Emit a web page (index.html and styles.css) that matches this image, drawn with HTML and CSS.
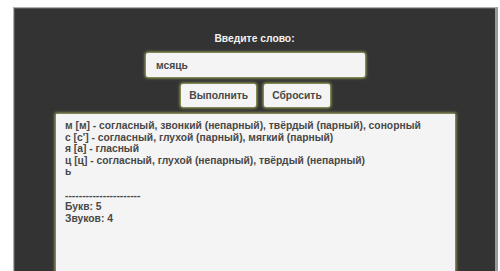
FILE: index.html
```html
<!DOCTYPE html>
<html lang="ru">
<head>
    <meta charset="UTF-8">
    <title>Фонетический разбор</title>
    <link rel="stylesheet" href="styles.css">
</head>
<body>
    <div class="panel">
        <label class="title" for="word">Введите слово:</label>
        <input type="text" id="word" class="word-input" value="мсяць">
        <div class="buttons">
            <button class="btn">Выполнить</button>
            <button class="btn">Сбросить</button>
        </div>
        <div class="result">м [м] - согласный, звонкий (непарный), твёрдый (парный), сонорный
с [с'] - согласный, глухой (парный), мягкий (парный)
я [а] - гласный
ц [ц] - согласный, глухой (непарный), твёрдый (непарный)
ь

----------------------
Букв: 5
Звуков: 4</div>
    </div>
</body>
</html>
```

FILE: styles.css
```css
:root {
    --panel-bg: #333333; --box-bg: #f4f4f4; --text-color: #484848;
    --glow: rgba(220, 230, 120, 0.75);
}
html, body { height: 100%; }
body { margin: 0; background-color: #ffffff; font-family: 'Liberation Sans', Arial, sans-serif; overflow: hidden; }
.panel { margin: 7px 2px 0 13px; height: calc(100% - 7px); overflow: hidden; background-color: var(--panel-bg); border: 1px solid #b0b0b0; border-bottom: none; border-right: 3px solid #9a9a9a; box-shadow: inset 1px 1px 0 #555; display: flex; flex-direction: column; align-items: center; padding-top: 25px; box-sizing: border-box; }
.title { color: #f2f2f2; font-weight: bold; font-size: 10.3px; margin-bottom: 9px; }
.word-input { width: 219px; height: 24px; flex-shrink: 0; box-sizing: border-box; border: none; border-radius: 2px; background-color: var(--box-bg); box-shadow: 0 0 3px 1px var(--glow); padding: 0 10px; margin-left: 2px; font-family: inherit; font-weight: bold; font-size: 10.3px; color: var(--text-color); outline: none; }
.buttons { display: flex; gap: 8px; margin-top: 7px; margin-left: 2px; }
.btn { height: 23px; padding: 0 8px; border: none; border-radius: 2px; background-color: var(--box-bg); box-shadow: 0 0 3px 1px var(--glow); font-family: inherit; font-weight: bold; font-size: 10.3px; color: var(--text-color); }
.result { width: 399px; flex: 1; margin-top: 7px; margin-left: 2px; box-sizing: border-box; background-color: var(--box-bg); box-shadow: 0 0 3px 1px var(--glow); padding: 6px 9px; white-space: pre; font-weight: bold; font-size: 10.3px; line-height: 11.6px; color: var(--text-color); }
```
